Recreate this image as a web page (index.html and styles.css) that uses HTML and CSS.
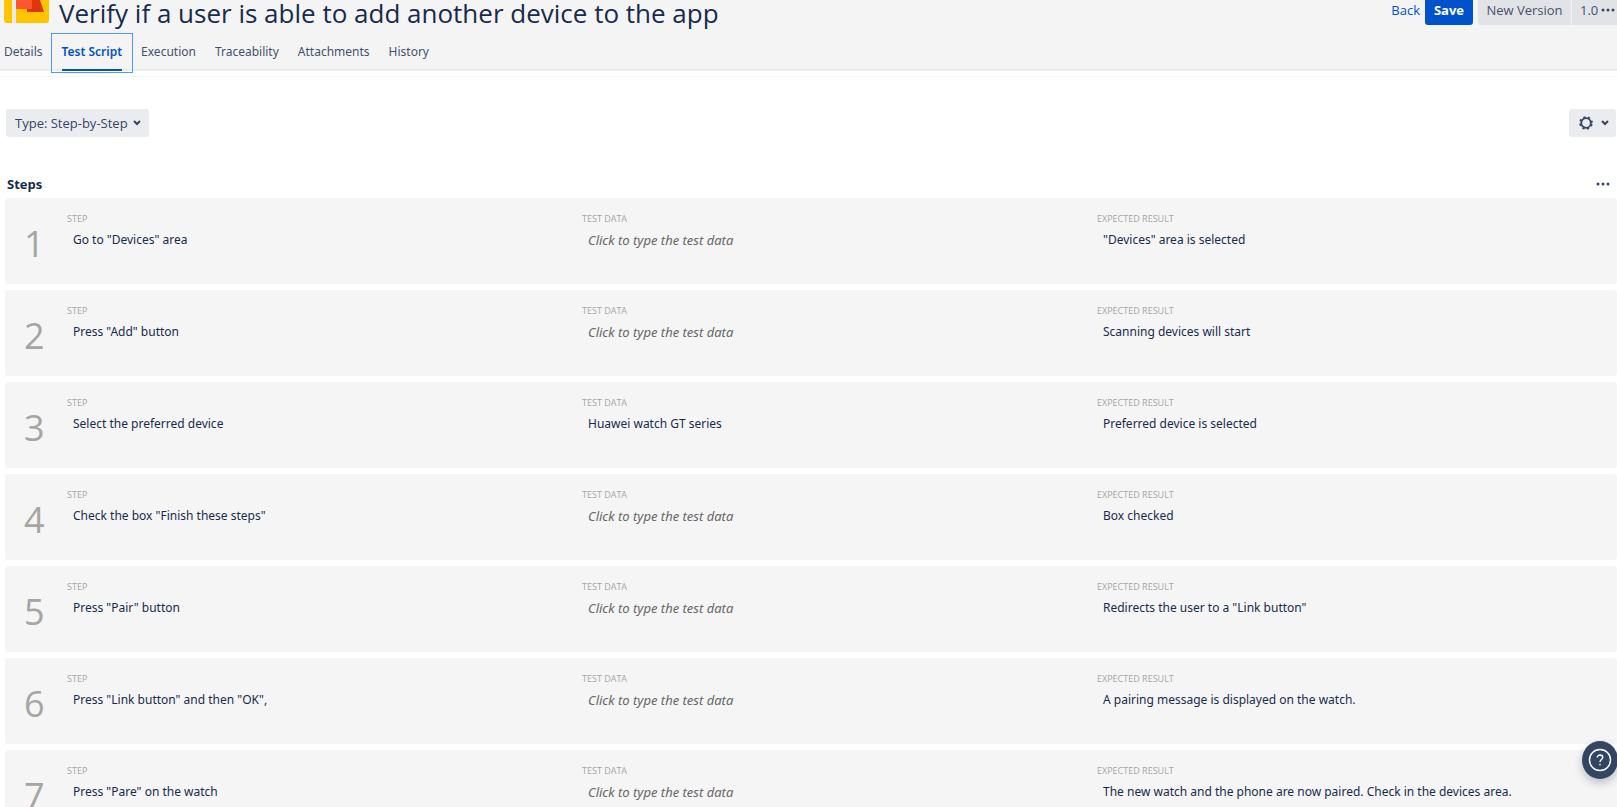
FILE: index.html
```html
<!DOCTYPE html>
<html lang="en">
<head>
<meta charset="utf-8">
<title>Verify if a user is able to add another device to the app</title>
<meta name="viewport" content="width=device-width, initial-scale=1">
<link rel="stylesheet" href="styles.css">
</head>
<body>
<header class="header">
  <div class="title-bar">
    <svg class="logo" viewBox="0 0 45 23" aria-hidden="true">
      <path fill="#ffc400" d="M0 0H45V20a3 3 0 0 1-3 3H3a3 3 0 0 1-3-3Z"/>
      <path fill="#ffebae" d="M8 0h1v23H8z"/>
      <path fill="#deebff" d="M9 0h3v23H9z"/>
      <path fill="#de350b" d="M23 0H36L40 12H23Z"/>
      <path fill="#ff5630" d="M12 0H28V9H12Z"/>
    </svg>
    <h1 class="title">Verify if a user is able to add another device to the app</h1>
    <div class="actions">
      <a class="back" href="#">Back</a>
      <button class="btn btn-primary" type="button">Save</button>
      <div class="btn-group">
        <button class="btn btn-version" type="button">New Version</button>
        <button class="btn btn-more" type="button">1.0
          <svg class="dots" viewBox="0 0 14 4" aria-hidden="true"><circle cx="2" cy="2" r="1.5"/><circle cx="7" cy="2" r="1.5"/><circle cx="12" cy="2" r="1.5"/></svg>
        </button>
      </div>
    </div>
  </div>
  <nav class="tabs">
    <a class="tab" href="#">Details</a>
    <a class="tab tab-active" href="#" aria-current="page"><span class="tab-label">Test Script</span></a>
    <a class="tab" href="#">Execution</a>
    <a class="tab" href="#">Traceability</a>
    <a class="tab" href="#">Attachments</a>
    <a class="tab" href="#">History</a>
  </nav>
</header>
<main class="main">
  <div class="toolbar">
    <button class="tool" type="button">Type: Step-by-Step
      <svg class="chevron" viewBox="0 0 8 6" aria-hidden="true"><path d="M1 1l3 3 3-3"/></svg>
    </button>
    <button class="tool tool-settings" type="button" aria-label="Settings">
      <svg class="gear" viewBox="0 0 14 14" aria-hidden="true"><circle cx="7" cy="7" r="4.8" fill="none" stroke="#344563" stroke-width="1.8"/><circle cx="7" cy="7" r="6" fill="none" stroke="#344563" stroke-width="1.6" stroke-dasharray="2.2 2.512" stroke-dashoffset="-1.256"/></svg>
      <svg class="chevron" viewBox="0 0 8 6" aria-hidden="true"><path d="M1 1l3 3 3-3"/></svg>
    </button>
  </div>
  <div class="steps-head">
    <h2 class="steps-title">Steps</h2>
    <button class="icon-btn" type="button" aria-label="More">
      <svg class="dots" viewBox="0 0 14 4" aria-hidden="true"><circle cx="2" cy="2" r="1.5"/><circle cx="7" cy="2" r="1.5"/><circle cx="12" cy="2" r="1.5"/></svg>
    </button>
  </div>
  <ol class="steps">
    <li class="step">
      <span class="number">1</span>
      <div class="field"><h3 class="label">STEP</h3><p class="value">Go to "Devices" area</p></div>
      <div class="field"><h3 class="label">TEST DATA</h3><p class="value placeholder">Click to type the test data</p></div>
      <div class="field"><h3 class="label">EXPECTED RESULT</h3><p class="value">"Devices" area is selected</p></div>
    </li>
    <li class="step">
      <span class="number">2</span>
      <div class="field"><h3 class="label">STEP</h3><p class="value">Press "Add" button</p></div>
      <div class="field"><h3 class="label">TEST DATA</h3><p class="value placeholder">Click to type the test data</p></div>
      <div class="field"><h3 class="label">EXPECTED RESULT</h3><p class="value">Scanning devices will start</p></div>
    </li>
    <li class="step">
      <span class="number">3</span>
      <div class="field"><h3 class="label">STEP</h3><p class="value">Select the preferred device</p></div>
      <div class="field"><h3 class="label">TEST DATA</h3><p class="value">Huawei watch GT series</p></div>
      <div class="field"><h3 class="label">EXPECTED RESULT</h3><p class="value">Preferred device is selected</p></div>
    </li>
    <li class="step">
      <span class="number">4</span>
      <div class="field"><h3 class="label">STEP</h3><p class="value">Check the box "Finish these steps"</p></div>
      <div class="field"><h3 class="label">TEST DATA</h3><p class="value placeholder">Click to type the test data</p></div>
      <div class="field"><h3 class="label">EXPECTED RESULT</h3><p class="value">Box checked</p></div>
    </li>
    <li class="step">
      <span class="number">5</span>
      <div class="field"><h3 class="label">STEP</h3><p class="value">Press "Pair" button</p></div>
      <div class="field"><h3 class="label">TEST DATA</h3><p class="value placeholder">Click to type the test data</p></div>
      <div class="field"><h3 class="label">EXPECTED RESULT</h3><p class="value">Redirects the user to a "Link button"</p></div>
    </li>
    <li class="step">
      <span class="number">6</span>
      <div class="field"><h3 class="label">STEP</h3><p class="value">Press "Link button" and then "OK",</p></div>
      <div class="field"><h3 class="label">TEST DATA</h3><p class="value placeholder">Click to type the test data</p></div>
      <div class="field"><h3 class="label">EXPECTED RESULT</h3><p class="value">A pairing message is displayed on the watch.</p></div>
    </li>
    <li class="step">
      <span class="number">7</span>
      <div class="field"><h3 class="label">STEP</h3><p class="value">Press "Pare" on the watch</p></div>
      <div class="field"><h3 class="label">TEST DATA</h3><p class="value placeholder">Click to type the test data</p></div>
      <div class="field"><h3 class="label">EXPECTED RESULT</h3><p class="value">The new watch and the phone are now paired. Check in the devices area.</p></div>
    </li>
  </ol>
</main>
<button class="help" type="button" aria-label="Help">
  <svg class="help-icon" viewBox="0 0 24 24" aria-hidden="true"><circle cx="12" cy="12" r="10.5"/><path d="M9.3 9.6C9.3 7.9 10.4 7 12 7s2.7 1 2.7 2.5c0 2-2.7 2.2-2.7 4.5"/><path d="M12 15.7v1.6"/></svg>
</button>
</body>
</html>
```
FILE: styles.css
```css
* { box-sizing: border-box; }
html, body { height: 100%; }
body {
  margin: 0;
  overflow: hidden;
  background: #fff;
  color: #172b4d;
  font: 13px/20px "Segoe UI", "Open Sans", "Noto Sans", sans-serif;
}
h1, h2, h3, p, ol { margin: 0; padding: 0; }
button { font: inherit; border: 0; cursor: pointer; white-space: nowrap; }
a { text-decoration: none; }

.header {
  background: #f4f4f4;
  border-bottom: 2px solid #ebecf0;
}
.title-bar {
  display: flex;
  align-items: flex-start;
  height: 33px;
  padding-left: 4px;
}
.logo { width: 45px; height: 23px; flex: none; }
.title {
  flex: 1;
  margin-left: 10px;
  font-size: 26px;
  line-height: 26px;
  font-weight: 500;
  white-space: nowrap;
}
.actions { display: flex; align-items: flex-start; }
.back { color: #0052cc; line-height: 20px; margin-right: 5px; }
.btn {
  height: 25px;
  padding: 0 8px 5px;
  line-height: 20px;
  background: #e2e3e6;
  color: #42526e;
}
.btn-primary {
  width: 48px;
  background: #0052cc;
  color: #fff;
  font-weight: 700;
  border-radius: 0 0 3px 3px;
}
.btn-group { display: flex; gap: 1px; margin-left: 5px; }
.btn-version { width: 93px; border-radius: 0 0 0 3px; }
.btn-more { display: flex; align-items: center; gap: 3px; width: 45px; padding-left: 8px; padding-right: 0; }
.dots { width: 14px; height: 4px; flex: none; fill: #344563; }

.tabs {
  display: flex;
  height: 36px;
  padding-left: 4px;
  gap: 19px;
  font-family: "Segoe UI", "Noto Sans", sans-serif;
  font-size: 12px;
}
.tab { color: #42526e; line-height: 38px; }
.tab-active {
  height: 40px;
  margin: 0 -11px;
  padding: 0 10px;
  border: 1px solid #4c9aff;
  color: #0052cc;
  font-weight: 600;
}
.tab-label { display: block; height: 37px; line-height: 36px; border-bottom: 2px solid #0052cc; }

.main { margin-top: 5px; border-top: 1px solid #f4f4f4; padding: 32px 0 0 5px; }
.toolbar { display: flex; justify-content: space-between; padding: 0 1px; }
.tool {
  display: flex;
  align-items: center;
  gap: 5px;
  height: 28px;
  padding: 0 8px 0 9px;
  border-radius: 3px;
  background: #ebecf0;
  color: #344563;
}
.tool-settings { width: 47px; padding: 0 7px 0 10px; gap: 8px; }
.gear { width: 14px; height: 14px; flex: none; }
.chevron { width: 8px; height: 6px; flex: none; fill: none; stroke: #344563; stroke-width: 2; }

.steps-head {
  display: flex;
  justify-content: space-between;
  align-items: center;
  height: 28px;
  margin-top: 33px;
  padding: 0 7px 0 2px;
}
.steps-title { font-size: 13px; line-height: 20px; font-weight: 700; }
.icon-btn { display: flex; padding: 0; background: none; }

.steps { display: flex; flex-direction: column; gap: 6px; list-style: none; }
.step {
  display: grid;
  grid-template-columns: 62px 1fr 1fr 1fr;
  min-height: 86px;
  padding: 14px 5px 0 0;
  border-radius: 3px;
  background: #f5f5f5;
}
.number {
  padding: 10px 0 0 19px;
  font-size: 36px;
  line-height: 44px;
  font-weight: 400;
  color: #a5a5a5;
}
.label { font-size: 9px; line-height: 14px; font-weight: 400; color: #a5a5a5; }
.value {
  padding: 4px 0 0 6px;
  font-family: "Segoe UI", "Noto Sans", sans-serif;
  font-size: 12px;
}
.placeholder { color: #666; font-size: 13px; font-style: italic; }

.help {
  position: fixed;
  right: -1px;
  bottom: 28px;
  display: flex;
  align-items: center;
  justify-content: center;
  width: 36px;
  height: 38px;
  padding: 0;
  border-radius: 50%;
  background: #344563;
  box-shadow: 0 4px 8px rgba(9, 30, 66, 0.25);
}
.help-icon { width: 24px; height: 24px; fill: none; stroke: #fff; stroke-width: 1.4; }
```
